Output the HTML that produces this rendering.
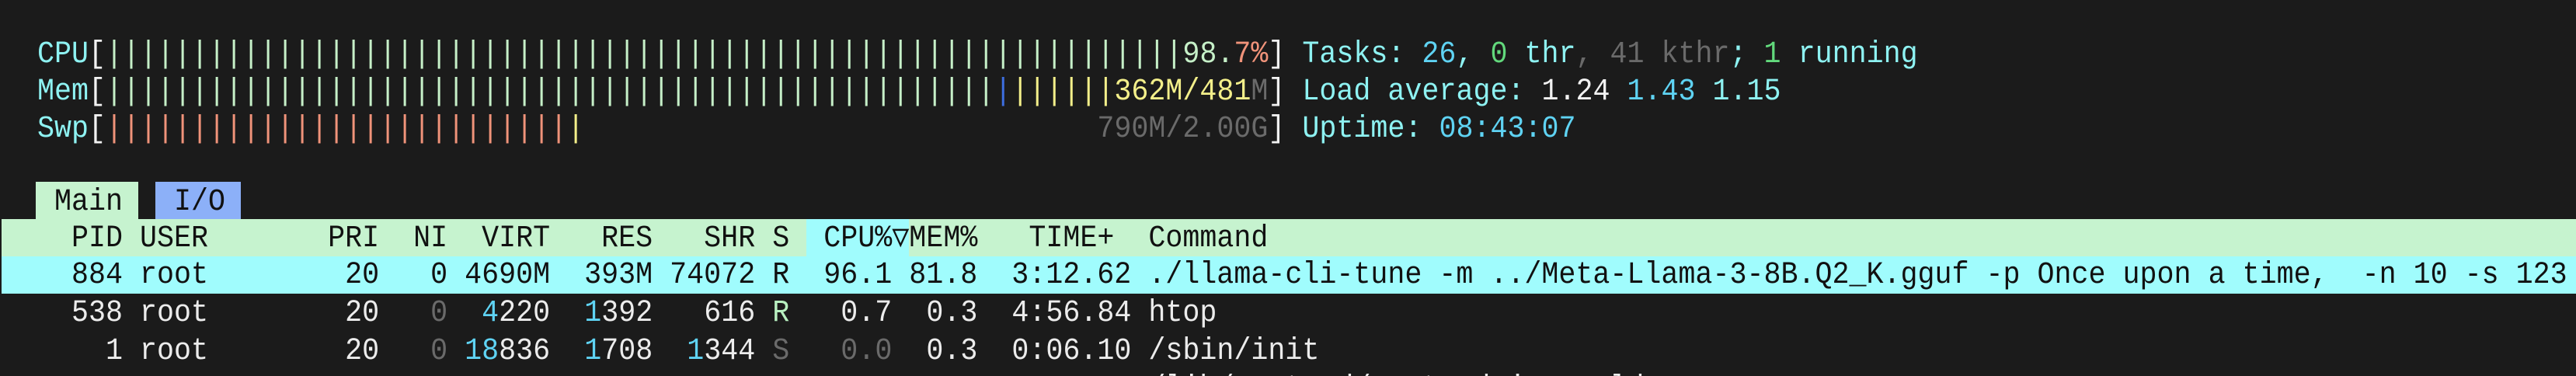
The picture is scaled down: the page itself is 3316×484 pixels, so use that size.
<!DOCTYPE html>
<html><head><meta charset="utf-8"><style>
html,body{margin:0;padding:0;background:#1b1b1b;width:3316px;height:484px;overflow:hidden}
#w{position:relative;width:3316px;height:484px;overflow:hidden}
.r{position:absolute;left:4px;height:48px;line-height:48px;white-space:pre;font-family:"Liberation Mono",monospace;font-size:40px;transform:scaleX(0.9167);transform-origin:0 0;color:#ececec}
.bg{position:absolute;height:48px}
.c{color:#8ef2f2}.bc{color:#5fd3f3}.g{color:#62d97c}.w{color:#f2f2f2}.gr{color:#6a6a6a}
.m{color:#c6f0c8}.o{color:#f0937a}.y{color:#f3ef8a}.b{color:#3d6ee0}.k{color:#111}.lg{color:#b8f0c0}
</style></head><body><div id="w">
<div class="bg" style="left:46px;top:234px;width:132px;background:#c6f3cf"></div>
<div class="bg" style="left:200px;top:234px;width:110px;background:#8cb0f8"></div>
<div class="bg" style="left:2px;top:282px;width:3314px;background:#c6f3cf"></div>
<div class="bg" style="left:1038px;top:282px;width:132px;background:#a0fcfd"></div>
<div class="bg" style="left:2px;top:330px;width:3314px;background:#a0fcfd"></div>

<div class="r" style="top:47px"><span class="c">  CPU</span><span class="w">[</span><span class="m">|||||||||||||||||||||||||||||||||||||||||||||||||||||||||||||||98.</span><span class="o">7%</span><span class="w">]</span> <span class="c">Tasks: </span><span class="bc">26</span><span class="c">, </span><span class="g">0</span><span class="c"> thr</span><span class="gr">, 41 kthr</span><span class="c">; </span><span class="g">1</span><span class="c"> running</span></div>
<div class="r" style="top:95px"><span class="c">  Mem</span><span class="w">[</span><span class="m">||||||||||||||||||||||||||||||||||||||||||||||||||||</span><span class="b">|</span><span class="y">||||||362M/481</span><span class="gr">M</span><span class="w">]</span> <span class="c">Load average: </span><span class="w">1.24 </span><span class="bc">1.43 </span><span class="c">1.15</span></div>
<div class="r" style="top:143px"><span class="c">  Swp</span><span class="w">[</span><span class="o">|||||||||||||||||||||||||||</span><span class="y">|</span>                              <span class="gr">790M/2.00G</span><span class="w">]</span> <span class="c">Uptime: </span><span class="bc">08:43:07</span></div>

<div class="r k" style="top:237px">   Main   I/O</div>
<div class="r k" style="top:284px">    PID USER       PRI  NI  VIRT   RES   SHR S  CPU%▽MEM%   TIME+  Command</div>
<div class="r k" style="top:331px">    884 root        20   0 4690M  393M 74072 R  96.1 81.8  3:12.62 ./llama-cli-tune -m ../Meta-Llama-3-8B.Q2_K.gguf -p Once upon a time,  -n 10 -s 123</div>
<div class="r" style="top:380px">    538 root        20   <span class="gr">0</span>  <span class="bc">4</span>220  <span class="bc">1</span>392   616 <span class="lg">R</span>   0.7  0.3  4:56.84 htop</div>
<div class="r" style="top:429px;height:55px;overflow:hidden">      1 root        20   <span class="gr">0</span> <span class="bc">18</span>836  <span class="bc">1</span>708  <span class="bc">1</span>344 <span class="gr">S</span>   <span class="gr">0.0</span>  0.3  0:06.10 /sbin/init
                                                                   /lib/systemd/systemd-journald</div>
</div></body></html>
